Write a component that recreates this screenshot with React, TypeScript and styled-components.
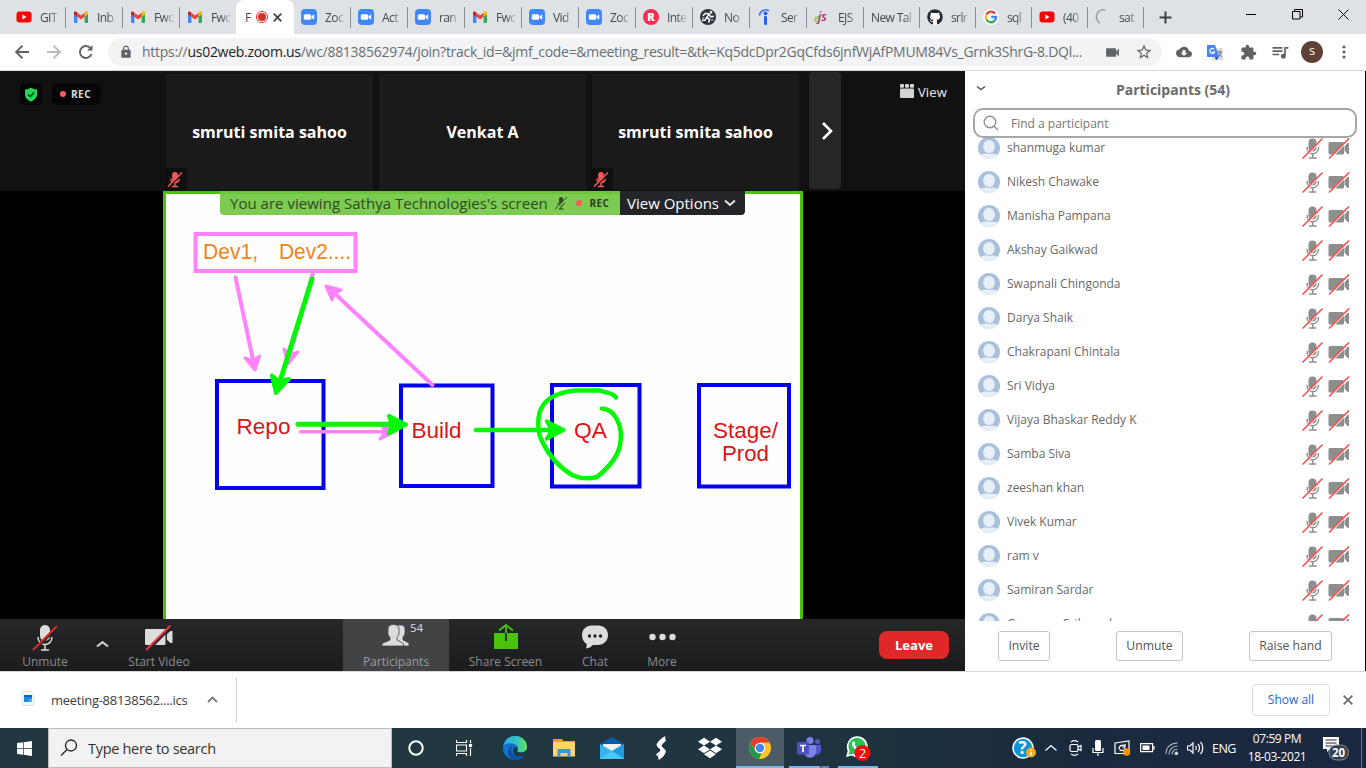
import React from 'react';
import styled, { createGlobalStyle, css } from 'styled-components';
import { FaGithub, FaDropbox, FaWindows } from 'react-icons/fa';
import { MdCloudDownload, MdExtension, MdVideocam, MdStarBorder, MdLock, MdQueueMusic } from 'react-icons/md';

const GlobalStyle = createGlobalStyle`
  * { box-sizing: border-box; }
  body { margin: 0; overflow: hidden; background: #fff; }
`;

const UI = `'Open Sans', 'Noto Sans', sans-serif`;

const Screen = styled.div`
  width: 1366px;
  height: 768px;
  display: flex;
  flex-direction: column;
  overflow: hidden;
  font-family: ${UI};
`;

/* ---------- generic text and icon slot ---------- */

const Label = styled.span<{ $size?: number; $track?: number; $color?: string; $weight?: number }>`
  font-size: ${p => p.$size ?? 12}px;
  letter-spacing: ${p => p.$track ?? 0}px;
  color: ${p => p.$color ?? '#5f6368'};
  font-weight: ${p => p.$weight ?? 400};
  white-space: nowrap;
`;

const Slot = styled.div<{ $w: number }>`
  width: ${p => p.$w}px;
  flex: none;
  display: flex;
  align-items: center;
  justify-content: center;
  svg { display: block; flex: none; }
`;

/* ---------- browser tabs ---------- */

const TabStrip = styled.div`
  height: 34px;
  flex: none;
  display: flex;
  padding-left: 8px;
  background: #dee1e6;
`;

const Tab = styled.div<{ $w: number; $line: boolean }>`
  width: ${p => p.$w}px;
  flex: none;
  height: 34px;
  display: flex;
  align-items: center;
  gap: 8px;
  padding-left: 7px;
  border-left: 1px solid transparent;
  ${p => p.$line && css`border-image: linear-gradient(transparent 8px, #8a8d91 8px, #8a8d91 27px, transparent 27px) 1;`}
  svg { display: block; flex: none; }
`;

const TabTitle = styled.span`
  flex: 1;
  white-space: nowrap;
  font-size: 12px;
  letter-spacing: -0.6px;
  color: #45494d;
  margin-right: 5px;
  mask-image: linear-gradient(to right, #000 calc(100% - 10px), rgba(0, 0, 0, 0.1));
`;

const ActiveTab = styled.div`
  width: 58px;
  margin-right: -1px;
  height: 34px;
  flex: none;
  display: flex;
  align-items: center;
  padding-left: 9px;
  gap: 5px;
  background: #fff;
  border-radius: 8px 8px 0 0;
  svg { display: block; flex: none; }
`;

const WindowControls = styled.div`
  margin-left: auto;
  display: flex;
  height: 28px;
`;

const Gmail = () => (
  <svg width="16" height="16" viewBox="0 0 16 16">
    <path d="M1 4v9a1 1 0 0 0 1 1h2.400V7.500z" fill="#4285f4" />
    <path d="M15 4v9a1 1 0 0 1-1 1h-2.400V7.500z" fill="#34a853" />
    <path d="M11.600 4.200V7.700L15 5.200V3.600c0-1.400-1.600-2-2.600-1.200z" fill="#fbbc04" />
    <path d="M4.400 7.700V3.800L8 6.500l3.600-2.700v3.900L8 10.400z" fill="#ea4335" />
    <path d="M1 3.600v1.600l3.400 2.500V3.800L3.600 2.900C2.600 2 1 2.400 1 3.600z" fill="#c5221f" />
  </svg>
);

const Youtube = () => (
  <svg width="16" height="16" viewBox="0 0 16 16">
    <rect x="0.500" y="2.500" width="15" height="11" rx="3" fill="#f00" />
    <path d="M6.400 5.600v4.800L10.500 8z" fill="#fff" />
  </svg>
);

const ZoomLogo = () => (
  <svg width="16" height="16" viewBox="0 0 16 16">
    <rect width="16" height="16" rx="4" fill="#4087fc" />
    <rect x="2.800" y="5.200" width="7.400" height="5.600" rx="1.500" fill="#fff" />
    <path d="M10.600 7.200l2.600-1.900v5.400l-2.600-1.900z" fill="#fff" />
  </svg>
);

const RLogo = () => (
  <svg width="16" height="16" viewBox="0 0 16 16">
    <circle cx="8" cy="8" r="8" fill="#fb2b54" />
    <text x="8" y="12" fontSize="11" fontWeight="800" fontFamily="Open Sans" textAnchor="middle" fill="#fff">R</text>
  </svg>
);

const Runner = () => (
  <svg width="16" height="16" viewBox="0 0 16 16">
    <circle cx="8" cy="8" r="8" fill="#2f3640" />
    <circle cx="11" cy="3.400" r="1.300" fill="#fff" />
    <path d="M3 6.800L5.500 4.300l3.500.8-2.300 3.400 2.800 1.800-.8 3.200M9 5.500l1.800 2.300 3-.6M6.500 8.500L5 11.300H2" fill="none" stroke="#fff" strokeWidth="1.500" />
    <path d="M2 9h2M11 11h2.500" stroke="#fff" strokeWidth=".8" />
  </svg>
);

const Indeed = () => (
  <svg width="16" height="16" viewBox="0 0 16 16">
    <circle cx="8.500" cy="4.300" r="1.900" fill="#2164f3" />
    <rect x="7" y="7" width="3" height="9" rx="1.200" fill="#2164f3" />
    <path d="M2.500 6.500C2.800 2 7.500-.5 12 1.600" fill="none" stroke="#2164f3" strokeWidth="1.300" />
  </svg>
);

const Ejs = () => (
  <svg width="16" height="16" viewBox="0 0 16 16">
    <text x="0" y="13" fontSize="11" fontStyle="italic" fontWeight="700" fontFamily="Open Sans" fill="#a8c36a">e</text>
    <text x="4" y="12" fontSize="12" fontStyle="italic" fontWeight="600" fontFamily="Open Sans" fill="#b3245f">js</text>
  </svg>
);

const GoogleG = () => (
  <svg width="16" height="16" viewBox="0 0 16 16">
    <circle cx="8" cy="8" r="8" fill="#fff" />
    <g fill="none" strokeWidth="2.300">
      <path d="M12.200 4.600A5.200 5.200 0 0 0 3.400 5.600" stroke="#ea4335" />
      <path d="M3.400 5.600A5.200 5.200 0 0 0 3.400 10.400" stroke="#fbbc05" />
      <path d="M3.400 10.400A5.200 5.200 0 0 0 11.400 12" stroke="#34a853" />
      <path d="M11.400 12A5.200 5.200 0 0 0 13.100 8H8.200" stroke="#4285f4" />
    </g>
  </svg>
);

const GithubMark = () => (
  <svg width="16" height="16" viewBox="0 0 16 16">
    <circle cx="8" cy="8" r="8" fill="#fff" />
    <FaGithub x="0" y="0" size={16} color="#24292e" />
  </svg>
);

const Spinner = () => (
  <svg width="16" height="16" viewBox="0 0 16 16">
    <path d="M10.500 1.200A7 7 0 0 0 5 14" fill="none" stroke="#9b9fa3" strokeWidth="1.500" />
  </svg>
);

const tabsBefore: [React.ReactNode, string][] = [
  [<Youtube />, 'GIT'], [<Gmail />, 'Inb'], [<Gmail />, 'Fwc'], [<Gmail />, 'Fwc'],
];
const tabsAfter: [React.ReactNode, string, number][] = [
  [<ZoomLogo />, 'Zoc', 57], [<ZoomLogo />, 'Act', 57], [<ZoomLogo />, 'ran', 57], [<Gmail />, 'Fwc', 57],
  [<ZoomLogo />, 'Vid', 57], [<ZoomLogo />, 'Zoc', 57], [<RLogo />, 'Inte', 57], [<Runner />, 'No', 57],
  [<Indeed />, 'Ser', 57], [<Ejs />, 'EJS', 57], [null, 'New Tal', 56], [<GithubMark />, 'srlr', 56],
  [<GoogleG />, 'sql', 56], [<Youtube />, '(40', 56], [<Spinner />, 'sat', 56],
];

const Tabs = () => (
  <TabStrip>
    {tabsBefore.map(([icon, title], i) => (
      <Tab key={i} $w={57} $line={i > 0}>{icon}<TabTitle>{title}</TabTitle></Tab>
    ))}
    <ActiveTab>
      <Label $size={12} $color="#45494d">F</Label>
      <svg width="12" height="14" viewBox="0 0 12 14">
        <circle cx="6" cy="7" r="5.500" fill="none" stroke="#d93025" strokeWidth="1" />
        <circle cx="6" cy="7" r="4" fill="#d93025" />
      </svg>
      <svg width="9" height="9" viewBox="0 0 9 9" stroke="#3c4043" strokeWidth="1.700"><path d="M.7.700l7.600 7.600M8.300.7L.7 8.300" /></svg>
    </ActiveTab>
    {tabsAfter.map(([icon, title, w], i) => (
      <Tab key={i} $w={w} $line={i > 0}>{icon}<TabTitle>{title}</TabTitle></Tab>
    ))}
    <Tab $w={45} $line>
      <Slot $w={28}><svg width="13" height="13" viewBox="0 0 13 13" stroke="#3c4043" strokeWidth="2"><path d="M6.500.5v12M.5 6.500h12" /></svg></Slot>
    </Tab>
    <WindowControls>
      <Slot $w={46}><svg width="10" height="10" stroke="#000"><path d="M0 5.500h10" /></svg></Slot>
      <Slot $w={46}><svg width="11" height="11" fill="none" stroke="#000"><path d="M.5 2.500h7.500v7.500H.5zM2.500 2.500v-2H10.500V8H8" /></svg></Slot>
      <Slot $w={46}><svg width="11" height="11" stroke="#000"><path d="M.5.5l10 10M10.500.5l-10 10" /></svg></Slot>
    </WindowControls>
  </TabStrip>
);

/* ---------- browser toolbar ---------- */

const Toolbar = styled.div`
  height: 37px;
  flex: none;
  display: flex;
  align-items: center;
  padding-left: 6px;
  background: #fff;
  border-bottom: 1px solid #d5d8da;
`;

const Omnibox = styled.div`
  width: 1054px;
  height: 28px;
  margin-left: 6px;
  border-radius: 14px;
  background: #f1f3f4;
  display: flex;
  align-items: center;
  padding-left: 10px;
`;

const Url = styled.div`
  width: 952px;
  margin-left: 8px;
  white-space: nowrap;
  font-size: 14px;
  line-height: 18px;
  margin-top: -1px;
  letter-spacing: -0.285px;
  color: #6a6e73;
  b { font-weight: 400; color: #202124; }
`;

const Avatar = styled.div`
  width: 22px;
  height: 22px;
  border-radius: 50%;
  background: #5d4037;
  color: #fff;
  font: 400 13px/19px ${UI};
  text-align: center;
`;

const Arrow = ({ flip, color }: { flip?: boolean; color: string }) => (
  <svg width="14" height="14" viewBox="0 0 14 14" fill="none" stroke={color} strokeWidth="1.900">
    <path d={flip ? 'M0 7h13M6.500.7L12.800 7l-6.300 6.300' : 'M14 7H1M7.500.7L1.200 7l6.300 6.300'} />
  </svg>
);

const AddressBar = () => (
  <Toolbar>
    <Slot $w={32}><Arrow color="#5f6368" /></Slot>
    <Slot $w={32}><Arrow flip color="#bababa" /></Slot>
    <Slot $w={32}>
      <svg width="16" height="16" viewBox="0 0 16 16" fill="none" stroke="#5f6368" strokeWidth="1.900">
        <path d="M13.500 10.200A6 6 0 1 1 12.600 4.200" /><path d="M14.500 1v5.400H9.100z" fill="#5f6368" stroke="none" />
      </svg>
    </Slot>
    <Omnibox>
      <Slot $w={16}><MdLock size={14} color="#5f6368" /></Slot>
      <Url>https://<b>us02web.zoom.us</b>/wc/88138562974/join?track_id=&amp;jmf_code=&amp;meeting_result=&amp;tk=Kq5dcDpr2GqCfds6jnfWjAfPMUM84Vs_Grnk3ShrG-8.DQl...</Url>
      <Slot $w={36}><MdVideocam size={17} color="#5f6368" /></Slot>
      <Slot $w={28}><MdStarBorder size={18} color="#5f6368" /></Slot>
    </Omnibox>
    <Slot $w={44}><MdCloudDownload size={16} color="#5f6368" /></Slot>
    <Slot $w={18}>
      <svg width="18" height="17" viewBox="0 0 18 17">
        <rect x="6" y="4" width="11" height="12" fill="#dcdcdc" />
        <path d="M1 1h8l4 12H2a1 1 0 0 1-1-1z" fill="#4285f4" />
        <path d="M9 13h4l-3 3.500z" fill="#3051c8" />
        <path d="M8.200 5.300A2.500 2.500 0 1 0 8.600 8H6.200" fill="none" stroke="#fff" strokeWidth="1.200" />
        <path d="M11 8h5M13.500 6.800V8M15 8c-.5 2.500-1.500 3.500-3 4.500M12.500 9.500l3 3.500" fill="none" stroke="#5e6d7a" />
      </svg>
    </Slot>
    <Slot $w={48}><MdExtension size={17} color="#5f6368" /></Slot>
    <Slot $w={15}><MdQueueMusic size={20} color="#5f6368" /></Slot>
    <Slot $w={50}><Avatar>s</Avatar></Slot>
    <Slot $w={14}><svg width="4" height="14" fill="#5f6368"><circle cx="2" cy="2" r="1.600" /><circle cx="2" cy="7" r="1.600" /><circle cx="2" cy="12" r="1.600" /></svg></Slot>
  </Toolbar>
);

/* ---------- meeting ---------- */

const MeetingArea = styled.div`
  height: 600px;
  flex: none;
  display: flex;
  border-right: 1px solid #000;
`;

const Stage = styled.div`
  width: 965px;
  flex: none;
  display: flex;
  flex-direction: column;
  background: #000;
`;

const Filmstrip = styled.div`
  height: 120px;
  flex: none;
  display: flex;
  background: #111;
  border-top: 2px solid #101510;
`;

const StripSide = styled.div<{ $w: number }>`
  width: ${p => p.$w}px;
  flex: none;
  display: flex;
  align-items: flex-start;
`;

const ShieldBox = styled.div`
  width: 22px;
  height: 22px;
  margin: 10px 10px 0 20px;
  border-radius: 5px;
  background: #060606;
  display: flex;
  align-items: center;
  justify-content: center;
`;

const RecPill = styled.div`
  width: 49px;
  height: 22px;
  margin-top: 10px;
  padding-left: 8px;
  border-radius: 7px;
  background: #060606;
  display: flex;
  align-items: center;
  gap: 5px;
`;

const Dot = styled.i`
  width: 6px;
  height: 6px;
  border-radius: 50%;
  background: #ff5a5a;
`;

const Thumb = styled.div`
  width: 207px;
  height: 116px;
  margin: 1px 6px 0 0;
  flex: none;
  position: relative;
  display: flex;
  align-items: center;
  justify-content: center;
  background: #1a1a1a;
`;

const MuteBadge = styled.div`
  position: absolute;
  left: 0;
  bottom: 0;
  width: 21px;
  height: 22px;
  background: #0f0f0f;
  padding: 3px 0 0 1px;
`;

const NextButton = styled.div`
  width: 32px;
  height: 117px;
  margin: -1px 0 0 4px;
  padding-left: 3px;
  border-radius: 4px;
  background: #262626;
  display: flex;
  align-items: center;
  justify-content: center;
`;

const ViewToggle = styled.div`
  display: flex;
  align-items: center;
  align-self: flex-start;
  gap: 4px;
  margin: 10px 0 0 59px;
  svg { margin-top: -2px; }
`;

const RedMic = () => (
  <svg width="16" height="17" viewBox="0 0 16 17" fill="none" stroke="#f25a5a">
    <rect x="5.200" y="1" width="5.600" height="10" rx="2.800" fill="#f25a5a" stroke="none" />
    <path d="M3.800 7.500c0 5.500 8.400 5.500 8.400 0M8 11.800v3.700M5 15.500h6" strokeWidth="1.400" />
    <path d="M1.500 16.500L15.500 2.500" stroke="#111" strokeWidth="1.500" /><path d="M1 15.500L15 1.500" strokeWidth="1.500" />
  </svg>
);

const SharedScreen = styled.div`
  width: 640px;
  height: 428px;
  margin-left: 163px;
  position: relative;
  background: #fefefe;
  border: 3px solid #4ac40a;
  border-bottom: 0;
  svg { display: block; }
`;

const ShareBanner = styled.div`
  position: absolute;
  left: 54px;
  top: -3px;
  height: 24px;
  display: flex;
`;

const BannerText = styled.div`
  width: 400px;
  padding-left: 10px;
  display: flex;
  align-items: center;
  background: linear-gradient(#6cc639 3px, #7dcb51 3px);
  border-radius: 0 0 0 4px;
`;

const ViewOptions = styled.div`
  width: 125px;
  padding-left: 7px;
  display: flex;
  align-items: center;
  gap: 5px;
  background: #242528;
  border-radius: 0 0 4px 0;
`;

const Whiteboard = () => (
  <svg width="634" height="425" viewBox="166 194 634 425" strokeLinecap="round" strokeLinejoin="round">
    <g fill="none" stroke="#0202ee" strokeWidth="4" strokeLinejoin="miter">
      <rect x="217" y="381" width="106.500" height="107" />
      <rect x="401" y="385.500" width="91.500" height="100.500" />
      <rect x="552" y="385" width="87.500" height="101.500" />
      <rect x="699" y="385" width="90" height="101.500" />
    </g>
    <g fontFamily="Liberation Sans" fontSize="22.500" fill="#dc1414">
      <text x="236.500" y="434" textLength="54" lengthAdjust="spacingAndGlyphs">Repo</text>
      <text x="411.500" y="438" textLength="50" lengthAdjust="spacingAndGlyphs">Build</text>
      <text x="574" y="438" textLength="33" lengthAdjust="spacingAndGlyphs">QA</text>
      <text x="713" y="438" textLength="65" lengthAdjust="spacingAndGlyphs">Stage/</text>
      <text x="722" y="461" textLength="47" lengthAdjust="spacingAndGlyphs">Prod</text>
      <text x="203" y="259" textLength="55" lengthAdjust="spacingAndGlyphs" fill="#f08418">Dev1,</text>
      <text x="279" y="259" textLength="72" lengthAdjust="spacingAndGlyphs" fill="#f08418">Dev2....</text>
    </g>
    <rect x="195.500" y="234" width="160" height="37" fill="none" stroke="#ff82ff" strokeWidth="4" strokeLinejoin="miter" />
    <g stroke="#ff82ff" fill="#ff82ff" strokeWidth="4">
      <path d="M235.500 277.500L253.500 362" /><path d="M255 370l-10-12 8 3 6.500-5z" strokeWidth="3" />
      <path d="M313 273L289 358" /><path d="M288 364l-4-15 6 6 8-3z" strokeWidth="3" />
      <path d="M432.500 385L333 292" /><path d="M326 286l15 4-7 3-2 7z" strokeWidth="3" />
      <path d="M300.500 431.800H388" strokeWidth="3.500" /><path d="M396 431l-16 8 5-7-3-6z" strokeWidth="3" />
    </g>
    <g stroke="#04f804" fill="#04f804" strokeWidth="5">
      <path d="M312 279L279.500 383" /><path d="M276 393l-4-17.500 7 6 10-2.500z" strokeWidth="4" />
      <path d="M298 424.300H398" /><path d="M406 424.500l-17 9 3-9-3-8.500z" strokeWidth="4" />
      <path d="M476 430H557" strokeWidth="4.500" /><path d="M564 430l-17.500 9 5-9-5-9z" strokeWidth="3.500" />
      <path fill="none" strokeWidth="4.500" d="M616 397.500C613 392.500 605 393 600 390.500H575C562 392 548 396 542 407C537 415 537 432 542 441C549 456 560 468 573 475.500C582 479 590 479 597 477C608 468 618 456 620 445C624 425 614 409 602 408.500" />
    </g>
  </svg>
);

const ControlBar = styled.div`
  height: 52px;
  flex: none;
  display: flex;
  background: linear-gradient(#262729, #1b1c1e);
`;

const Control = styled.div<{ $w: number; $ml?: number; $on?: boolean }>`
  width: ${p => p.$w}px;
  margin-left: ${p => p.$ml ?? 0}px;
  height: 52px;
  flex: none;
  position: relative;
  display: flex;
  flex-direction: column;
  align-items: center;
  justify-content: flex-end;
  padding-bottom: 1px;
  background: ${p => (p.$on ? '#424345' : 'transparent')};
`;

const ControlIcon = styled.div`
  height: 29px;
  display: flex;
  align-items: flex-start;
`;

const Count = styled.span`
  position: absolute;
  left: 67px;
  top: 1px;
  font-size: 11.500px;
  color: #dcdcdc;
`;

const Leave = styled.div`
  width: 70px;
  height: 28px;
  margin: 12px 0 0 183px;
  border-radius: 8px;
  background: #e02828;
  display: flex;
  align-items: center;
  justify-content: center;
`;

const ctl = { $size: 12, $color: '#8c8c8e' };

const Controls = () => (
  <ControlBar>
    <Control $w={90}>
      <ControlIcon>
        <svg width="26" height="27" viewBox="0 0 26 27" fill="none" stroke="#dcdcdc" strokeWidth="1.500">
          <rect x="8" y="1" width="10" height="16" rx="5" fill="#dcdcdc" stroke="none" />
          <path d="M6 13c0 10 14 10 14 0M13 21v5M9 26h8" />
          <path d="M2 27L26 3" stroke="#242527" strokeWidth="2" /><path d="M1 26L25 2" stroke="#e02828" strokeWidth="2" />
        </svg>
      </ControlIcon>
      <Label {...ctl}>Unmute</Label>
    </Control>
    <Slot $w={26}><svg width="15" height="8" fill="none" stroke="#cfcfcf" strokeWidth="2.200"><path d="M1 5.500l5.500-4.300L12 5.500" /></svg></Slot>
    <Control $w={86}>
      <ControlIcon>
        <svg width="30" height="27" viewBox="0 0 30 27">
          <rect x="1" y="5" width="20.500" height="16" rx="1" fill="#dcdcdc" /><path d="M23 10l3.500-3H28.500v12h-2l-3.500-3z" fill="#dcdcdc" />
          <path d="M3 27L28 2" stroke="#242527" strokeWidth="3" /><path d="M2 26L26.500 1.500" stroke="#e83a3a" strokeWidth="2" />
        </svg>
      </ControlIcon>
      <Label {...ctl}>Start Video</Label>
    </Control>
    <Control $w={106} $ml={141} $on>
      <ControlIcon>
        <svg width="29" height="24" viewBox="0 0 29 24" fill="#dcdcdc" stroke="#424345" strokeWidth=".8">
          <path d="M13 1h6c2.500 0 4 1.500 4 4v4c0 2-1.500 3-2 4v3l6 3v3H13z" />
          <path d="M6 5c0-3 2-4.500 5.500-4.500S17 2 17 5v4c0 2-1.500 4-2 4.500V16l6.500 3.500V22H0v-2.500L8 16v-2.500C7 12.500 6 11 6 9z" />
        </svg>
      </ControlIcon>
      <Count>54</Count>
      <Label {...ctl} $color="#9c9d9f">Participants</Label>
    </Control>
    <Control $w={113}>
      <ControlIcon>
        <svg width="24" height="27" viewBox="0 0 24 27">
          <path d="M0 9h24v16H0z" fill="#4ac40a" />
          <path d="M12 1v8M5 6.500l7-5.500 7 5.500" fill="none" stroke="#4ac40a" strokeWidth="1.800" /><path d="M12 9v8" stroke="#1f2a1f" strokeWidth="1.800" />
        </svg>
      </ControlIcon>
      <Label {...ctl}>Share Screen</Label>
    </Control>
    <Control $w={66}>
      <ControlIcon>
        <svg width="26" height="26" viewBox="0 0 26 26">
          <path d="M10 1.500h6c6 0 10 4 10 9.500s-4 10-10 10h-5c-2 2-4 3.200-7 3.500.7-2 .8-3.200.6-4.500C1.500 18 0 15 0 11 0 5.500 4 1.500 10 1.500z" fill="#dcdcdc" />
          <circle cx="7.500" cy="12" r="1.700" fill="#222" /><circle cx="13" cy="12" r="1.700" fill="#222" /><circle cx="18.500" cy="12" r="1.700" fill="#222" />
        </svg>
      </ControlIcon>
      <Label {...ctl}>Chat</Label>
    </Control>
    <Control $w={68}>
      <ControlIcon>
        <svg width="27" height="25" fill="#dcdcdc"><circle cx="3.500" cy="13" r="3.200" /><circle cx="13.500" cy="13" r="3.200" /><circle cx="23.500" cy="13" r="3.200" /></svg>
      </ControlIcon>
      <Label {...ctl}>More</Label>
    </Control>
    <Leave><Label $size={13} $weight={700} $color="#fff">Leave</Label></Leave>
  </ControlBar>
);

const Meeting = () => (
  <Stage>
    <Filmstrip>
      <StripSide $w={166}>
        <ShieldBox>
          <svg width="14" height="15" viewBox="0 0 14 15"><path d="M7 .5c2 1.500 4 2 6 2v5c0 3.500-2.500 5.500-6 7-3.500-1.500-6-3.500-6-7v-5c2 0 4-.5 6-2z" fill="#23d959" /><path d="M4 7.500l2.200 2.200L10 5.500" fill="none" stroke="#073c18" strokeWidth="1.500" /></svg>
        </ShieldBox>
        <RecPill><Dot /><Label $size={10} $weight={700} $color="#ddd" $track={0.5}>REC</Label></RecPill>
      </StripSide>
      {['smruti smita sahoo', 'Venkat A', 'smruti smita sahoo'].map((name, i) => (
        <Thumb key={i}>
          <Label $size={16} $weight={700} $color="#fff">{name}</Label>
          {i !== 1 && <MuteBadge><RedMic /></MuteBadge>}
        </Thumb>
      ))}
      <NextButton><svg width="12" height="18" fill="none" stroke="#fff" strokeWidth="2.600"><path d="M2 1l8 8-8 8" /></svg></NextButton>
      <ViewToggle>
        <svg width="14" height="14" viewBox="0 0 14 14" fill="#d4d4d4"><rect y="4.500" width="14" height="9.500" rx="1" /><rect y="0" width="4" height="3.800" rx="1" /><rect x="5" width="4" height="3.800" rx="1" /><rect x="10" width="4" height="3.800" rx="1" /></svg>
        <Label $size={13} $color="#eee" $weight={500} $track={0.1}>View</Label>
      </ViewToggle>
    </Filmstrip>
    <SharedScreen>
      <Whiteboard />
      <ShareBanner>
        <BannerText>
          <Label $size={15} $color="#2d4a24" $track={0.02}>You are viewing Sathya Technologies's screen</Label>
          <Slot $w={26}>
            <svg width="14" height="14" viewBox="0 0 14 14" fill="none" stroke="#2d4a24"><rect x="5" y="1" width="4" height="8" rx="2" fill="#2d4a24" stroke="none" /><path d="M3.500 6.500c0 4.500 7 4.500 7 0M7 10v3M4.500 13h5" /><path d="M2 13.500L13.500 2" stroke="#7dcb51" strokeWidth="1.500" /><path d="M1 13L13 1" /></svg>
          </Slot>
          <Slot $w={10}><Dot /></Slot>
          <Slot $w={31}><Label $size={10} $weight={700} $color="#2d3a2a" $track={0.4}>REC</Label></Slot>
        </BannerText>
        <ViewOptions>
          <Label $size={15} $color="#fff">View Options</Label>
          <svg width="12" height="8" fill="none" stroke="#e8e8e8" strokeWidth="1.800"><path d="M1 1.500l5 4.500 5-4.500" /></svg>
        </ViewOptions>
      </ShareBanner>
    </SharedScreen>
    <Controls />
  </Stage>
);

/* ---------- participants panel ---------- */

const Panel = styled.div`
  flex: 1;
  display: flex;
  flex-direction: column;
  background: #fff;
`;

const PanelHeader = styled.div`
  height: 37px;
  flex: none;
  display: flex;
  align-items: center;
  padding: 0 8px 2px;
`;

const PanelTitle = styled.div`
  flex: 1;
  text-align: center;
`;

const SearchBox = styled.div`
  height: 30px;
  margin: 0 8px;
  flex: none;
  border: 2px solid #a6a6a6;
  border-radius: 10px;
  display: flex;
  align-items: center;
  padding-left: 8px;
  gap: 11px;
`;

const List = styled.div`
  height: 483px;
  flex: none;
  overflow: hidden;
`;

const Row = styled.div`
  height: 34px;
  display: flex;
  align-items: center;
  padding: 0 15px 0 13px;
  gap: 7px;
  &:first-child { margin-top: -7px; }
  svg { display: block; flex: none; }
`;

const Name = styled.div`
  flex: 1;
  font-size: 12px;
  padding-bottom: 1px;
  color: #686868;
`;

const Devices = styled.div`
  display: flex;
  gap: 5px;
`;

const PanelFooter = styled.div`
  flex: 1;
  display: flex;
  justify-content: space-between;
  align-items: flex-start;
  padding: 10px 33px 0;
`;

const FooterButton = styled.div<{ $w: number }>`
  width: ${p => p.$w}px;
  height: 30px;
  border: 1px solid #c4c4c8;
  border-radius: 3px;
  padding-bottom: 1px;
  display: flex;
  align-items: center;
  justify-content: center;
`;

const names = ['shanmuga kumar', 'Nikesh Chawake', 'Manisha Pampana', 'Akshay Gaikwad', 'Swapnali Chingonda', 'Darya Shaik', 'Chakrapani Chintala', 'Sri Vidya', 'Vijaya Bhaskar Reddy K', 'Samba Siva', 'zeeshan khan', 'Vivek Kumar', 'ram v', 'Samiran Sardar', 'Gummpu Srikanad'];

const Person = () => (
  <svg width="22" height="22" viewBox="0 0 22 22">
    <circle cx="11" cy="11" r="11" fill="#a9c0dc" />
    <path d="M2.500 18C5 15.500 17 15.500 19.500 18A11 11 0 0 1 2.500 18z" fill="#e9eff6" />
    <ellipse cx="11" cy="9.500" rx="6.300" ry="7" fill="#e9eff6" stroke="#a9c0dc" />
  </svg>
);

const MicOff = () => (
  <svg width="21" height="21" viewBox="0 0 21 21" fill="none" stroke="#8e8e8e" strokeWidth="1.500">
    <rect x="6.500" y="0.500" width="8" height="13" rx="4" fill="#8e8e8e" stroke="none" />
    <path d="M5 9c0 9 11.500 9 11.500 0M10.700 16v3.500M7 20h7.500" />
    <path d="M.8 21L21 1" stroke="#fff" strokeWidth="1.800" /><path d="M.5 20.500L20.500 .5" stroke="#ff4040" strokeWidth="1.400" />
  </svg>
);

const CamOff = () => (
  <svg width="22" height="21" viewBox="0 0 22 21">
    <rect x="0.500" y="4" width="15.500" height="12.500" rx="1.500" fill="#8e8e8e" /><path d="M16.500 8.500l3-3.500H21v11h-1.500l-3-3.500z" fill="#8e8e8e" />
    <path d="M1.300 21L21.500 1" stroke="#fff" strokeWidth="1.800" /><path d="M1 20.500L21 .5" stroke="#ff4040" strokeWidth="1.400" />
  </svg>
);

const Participants = () => (
  <Panel>
    <PanelHeader>
      <Slot $w={16}><svg width="10" height="6" fill="none" stroke="#555" strokeWidth="1.400"><path d="M1 .5l4 3 4-3" /></svg></Slot>
      <PanelTitle><Label $size={14} $weight={700} $color="#6a6a6a">Participants (54)</Label></PanelTitle>
    </PanelHeader>
    <SearchBox>
      <svg width="17" height="17" viewBox="0 0 17 17" fill="none" stroke="#8f8f8f" strokeWidth="1.400"><circle cx="7" cy="7" r="5.800" /><path d="M11.200 11.200l3.600 3.800" /></svg>
      <Label $size={12} $color="#757575">Find a participant</Label>
    </SearchBox>
    <List>
      {names.map(n => <Row key={n}><Person /><Name>{n}</Name><Devices><MicOff /><CamOff /></Devices></Row>)}
    </List>
    <PanelFooter>
      <FooterButton $w={52}><Label $size={12.2} $color="#555">Invite</Label></FooterButton>
      <FooterButton $w={67}><Label $size={12.2} $color="#555">Unmute</Label></FooterButton>
      <FooterButton $w={83}><Label $size={12.2} $color="#555">Raise hand</Label></FooterButton>
    </PanelFooter>
  </Panel>
);

/* ---------- downloads shelf ---------- */

const Shelf = styled.div`
  height: 57px;
  flex: none;
  display: flex;
  align-items: center;
  border-top: 1px solid #d6d8da;
  background: #fff;
`;

const Download = styled.div`
  width: 237px;
  height: 44px;
  display: flex;
  align-items: center;
  padding: 0 0 2px 21px;
  border-right: 1px solid #cdcfd1;
  svg { flex: none; }
`;

const FileName = styled.div`
  width: 153px;
  flex: none;
  padding-left: 16px;
`;

const ShowAll = styled.div`
  width: 78px;
  height: 32px;
  margin: 0 0 1px auto;
  padding-bottom: 1px;
  border: 1px solid #dadce0;
  border-radius: 4px;
  display: flex;
  align-items: center;
  justify-content: center;
`;

const Downloads = () => (
  <Shelf>
    <Download>
      <svg width="14" height="16" viewBox="0 0 14 16"><path d="M1 .5h9l3 3v11H1z" fill="#f5f5f5" stroke="#e4e4e4" /><rect x="3" y="4" width="8" height="7" fill="#1d8be0" /><path d="M3 4h8v2H3z" fill="#0b64b5" /><path d="M8 8h3v3H8z" fill="#50b4f4" /></svg>
      <FileName><Label $size={13} $track={-0.27} $color="#3c4043">meeting-88138562....ics</Label></FileName>
      <Slot $w={48}><svg width="11" height="7" fill="none" stroke="#75797d" strokeWidth="1.800"><path d="M1 6l4.500-4.500L10 6" /></svg></Slot>
    </Download>
    <ShowAll><Label $size={12} $weight={500} $color="#1a66d8">Show all</Label></ShowAll>
    <Slot $w={36}><svg width="10" height="10" stroke="#6b6f73" strokeWidth="1.900"><path d="M.7.700l8.600 8.600M9.300.7L.7 9.300" /></svg></Slot>
  </Shelf>
);

/* ---------- taskbar ---------- */

const Taskbar = styled.div`
  height: 40px;
  flex: none;
  display: flex;
  background: linear-gradient(to right, #20373f, #213840 30%, #1f3440 60%, #1a2b3e 75%, #1a2740);
`;

const TaskSearch = styled.div`
  width: 344px;
  flex: none;
  height: 40px;
  display: flex;
  align-items: center;
  background: #f2f2f2;
  border: 1px solid #b8bcbe;
`;

const TaskApp = styled(Slot)<{ $bar?: string; $on?: boolean }>`
  background-color: ${p => (p.$on ? '#4c5b65' : 'transparent')};
  ${p => p.$bar && css`
    background-image: ${p.$bar};
    background-size: 100% 2px;
    background-position: bottom;
    background-repeat: no-repeat;
  `}
`;

const Clock = styled.div`
  width: 72px;
  flex: none;
  display: flex;
  flex-direction: column;
  align-items: center;
  line-height: 18px;
  padding-top: 2px;
`;

const ShowDesktop = styled.div`
  width: 5px;
  margin-left: auto;
  border-left: 1px solid #6b7784;
`;

const Edge = () => (
  <svg width="24" height="24" viewBox="0 0 24 24">
    <defs>
      <linearGradient id="edgeTop" x1="0" x2="1"><stop offset="0" stopColor="#2aa8e8" /><stop offset=".6" stopColor="#35c8c0" /><stop offset="1" stopColor="#6be04a" /></linearGradient>
    </defs>
    <circle cx="12" cy="12" r="12" fill="#1273cf" />
    <path d="M.3 10C2 3 7 0 12 0c7 0 12 5 12 10.500 0 4-3 6-6.500 6-2 0-3.800-.8-3.300-2 1.600-2 .6-5.500-2.700-6.500C7 6.600 2 7 .3 10z" fill="url(#edgeTop)" />
    <path d="M11.500 8C8 9 7.500 13 9 16c2 4 7 6 12.500 3.500C18 24.500 12 25 8 22.500 3 19 4 10 11.500 8z" fill="#0c50a0" />
    <path d="M14.200 14.500c-.5 1.200 1.300 2 3.300 2 2.500 0 5-1 6.500-3-.3 2.500-1.300 4.500-2.500 6C16 21.500 11 20 10 15.500 9.500 12 12 11 13.800 11c1 1 1 2.500.4 3.500z" fill="#20383f" />
  </svg>
);

const Explorer = () => (
  <svg width="22" height="20" viewBox="0 0 22 20">
    <path d="M0 1h9l1.500 2H22v3H0z" fill="#e5a21b" /><rect y="4" width="22" height="14.500" fill="#fdd568" />
    <path d="M4.500 11h13v8h-3v-4h-7v4h-3z" fill="#3d96dc" />
  </svg>
);

const Mail = () => (
  <svg width="24" height="22" viewBox="0 0 24 22">
    <path d="M0 7L12 0l12 7v3H0z" fill="#0c5aa6" /><path d="M3 7h18v10H3z" fill="#f2f2f2" />
    <path d="M0 7l12 7 12-7v15H0z" fill="#35b4ee" /><path d="M24 7L12 14l12 8z" fill="#2098dc" /><path d="M0 22l12-8 12 8z" fill="#4cc8fa" />
  </svg>
);

const Chrome = () => (
  <svg width="22" height="22" viewBox="0 0 22 22">
    <circle cx="11" cy="11" r="11" fill="#fbc52b" />
    <path d="M1.500 5.500A11 11 0 0 1 20.500 5.500H11L6.300 13.700z" fill="#e33b2e" />
    <path d="M1.500 5.500l4.700 8.200A5.500 5.500 0 0 0 11 16.500L12.500 16.300 10 22A11 11 0 0 1 1.500 5.500z" fill="#1b9a4c" />
    <circle cx="11" cy="11" r="5.300" fill="#fff" /><circle cx="11" cy="11" r="4.200" fill="#4285f4" />
  </svg>
);

const Teams = () => (
  <svg width="24" height="22" viewBox="0 0 24 22">
    <circle cx="20.500" cy="4.500" r="2.500" fill="#5059c9" /><path d="M17 8h7v6a4 4 0 0 1-7 2z" fill="#5059c9" />
    <circle cx="13" cy="3.500" r="3.500" fill="#7b83eb" /><path d="M8 8h11v7.500a6 6 0 0 1-11 2.500z" fill="#7b83eb" />
    <rect y="5" width="12" height="12.500" rx="1" fill="#4b53bc" />
    <path d="M3 8.500h6M6 8.500v6.500" stroke="#fff" strokeWidth="1.700" />
  </svg>
);

const Whatsapp = () => (
  <svg width="26" height="26" viewBox="0 0 26 26">
    <path d="M1 22l1.700-6A10.500 10.500 0 1 1 6.500 20.500z" fill="#fff" />
    <path d="M3.500 19.700l1.200-4A8.500 8.500 0 1 1 7.800 18.700z" fill="#28c152" />
    <path d="M7.500 7c1-1.500 2-1 2.700 1.500-.8 1.500-.8 1.500 2.800 4.500 2-1.300 2-1 4 .5-1 3-4 3-7 .5S6.500 9 7.500 7z" fill="#fff" />
    <circle cx="17.500" cy="18" r="8" fill="#f40d0d" />
    <text x="17.500" y="22.500" fontSize="12.500" fontFamily="Open Sans" textAnchor="middle" fill="#fff">2</text>
  </svg>
);

const tray = { fill: 'none', stroke: '#fff', strokeWidth: 1.2 };
const blue = 'linear-gradient(#76b9ed, #76b9ed)';

const Task = () => (
  <Taskbar>
    <Slot $w={48}><FaWindows size={17} color="#fff" /></Slot>
    <TaskSearch>
      <Slot $w={39}><svg width="18" height="18" viewBox="0 0 18 18" fill="none" stroke="#222" strokeWidth="1.300"><circle cx="11" cy="6.500" r="5.500" /><path d="M7 10.500L1 16.500" /></svg></Slot>
      <Label $size={14.5} $track={-0.3} $color="#333">Type here to search</Label>
    </TaskSearch>
    <Slot $w={48}><svg width="16" height="16"><circle cx="8" cy="8" r="6.700" fill="none" stroke="#fff" strokeWidth="2" /></svg></Slot>
    <Slot $w={48}><svg width="17" height="16" {...tray}><path d="M.5 0v2.500h10V0M.5 16v-2.500h10V16M.5 5h10v6H.5zM14.500 0v3M14.500 8v8" /><rect x="13.500" y="4.500" width="2" height="2" fill="#fff" /></svg></Slot>
    <Slot $w={54}><Edge /></Slot>
    <Slot $w={43}><Explorer /></Slot>
    <Slot $w={54}><Mail /></Slot>
    <Slot $w={44}><svg width="12" height="24" viewBox="0 0 12 24"><path d="M10.500 0C7 1.500 3 5 1.500 8.500 1.500 11 4.500 12 5.500 14 5 16 1 17.500 1 19c1.500.5 2.500 1 2.500 5C7 22.500 10 19 11 15.500 10.500 13 7.500 12 6.500 10c.5-2.500 4-4 4.500-6C10 3 10 2 10.500 0z" fill="#fff" /></svg></Slot>
    <Slot $w={53}><FaDropbox size={24} color="#fff" /></Slot>
    <TaskApp $w={48} $on $bar={blue}><Chrome /></TaskApp>
    <Slot $w={5} />
    <TaskApp $w={40} $bar="linear-gradient(to right, #76b9ed 31px, #26414f 31px, #26414f 32px, #5a8cb5 32px)"><Teams /></TaskApp>
    <Slot $w={9} />
    <TaskApp $w={40} $bar={blue}><Whatsapp /></TaskApp>
    <Slot $w={132} />
    <Slot $w={28}>
      <svg width="24" height="22" viewBox="0 0 24 22"><circle cx="11" cy="11" r="10" fill="#0d93d8" stroke="#fff" strokeWidth="1.500" /><text x="10.500" y="17" fontSize="17" fontWeight="700" fontFamily="Open Sans" textAnchor="middle" fill="#fff">?</text><circle cx="19" cy="15.500" r="5" fill="#f5a81c" /><path d="M19 12.500v1.200M19 15v3.500" stroke="#fff" strokeWidth="1.500" /></svg>
    </Slot>
    <Slot $w={25}><svg width="12" height="8" {...tray}><path d="M.5 6.500L6 1.500l5.500 5" /></svg></Slot>
    <Slot $w={24}><svg width="13" height="16" {...tray}><rect x="1" y="4.500" width="8" height="7" rx="1.500" /><path d="M9 7l3-1.500v5L9 9M2 2c2-1.500 5-1.500 7 0M2 14c2 1.500 5 1.500 7 0" /></svg></Slot>
    <Slot $w={22}><svg width="12" height="16" {...tray}><rect x="3" y="0" width="6" height="11" rx="1.500" fill="#fff" stroke="none" /><path d="M1 8v4.500h10V8M6 12.500V16" /></svg></Slot>
    <Slot $w={26}><svg width="17" height="16" {...tray}><path d="M1 3l14-2v12.500H1zM5 9c0-4 5-5 6-2M11 4v3H8M11 8c-1 3-4 3-5.500 1.500" /><circle cx="12.500" cy="12" r="3.800" fill="#fb9208" stroke="none" /></svg></Slot>
    <Slot $w={24}><svg width="15" height="10" {...tray}><path d="M.6.600h12v8H.6zM14 3v3.500" /><rect x="2.500" y="2.500" width="7" height="4.500" fill="#fff" stroke="none" /></svg></Slot>
    <Slot $w={24}><svg width="13" height="13" fill="none" stroke="#b9c0c8" strokeWidth="1.100"><path d="M1 12C1 5 6 1 12.500 1M4 12.500C4 8 7.500 4 12.500 4M7 12.500c0-3 2-5.200 5.500-5.200" /><circle cx="11.500" cy="11.500" r="1.500" fill="#fff" /></svg></Slot>
    <Slot $w={24}><svg width="17" height="14" {...tray}><path d="M.5 5h2.500l3-3v10L3 9H.5zM8.500 5c1 1 1 3 0 4M11 3c2 2 2 6 0 8M13.500 1c3 3 3 9 0 12" /></svg></Slot>
    <Slot $w={34}><Label $size={12.5} $color="#fff" $track={-0.5}>ENG</Label></Slot>
    <Clock>
      <Label $size={12} $color="#fff" $track={-0.4}>07:59 PM</Label>
      <Label $size={12} $color="#fff" $track={-0.4}>18-03-2021</Label>
    </Clock>
    <Slot $w={46}>
      <svg width="28" height="26" viewBox="0 0 28 26"><path d="M1 2h16v12H8l-3 3v-3H1z" fill="#fff" /><path d="M3.500 5h11M3.500 8h11M3.500 11h7" stroke="#1c2b3e" strokeWidth="1.200" /><rect x="7" y="10" width="19.500" height="15" rx="7.500" fill="#35404c" stroke="#8a929b" /><text x="16.500" y="22" fontSize="11.500" fontWeight="700" fontFamily="Open Sans" textAnchor="middle" fill="#fff">20</text></svg>
    </Slot>
    <ShowDesktop />
  </Taskbar>
);

export default function App() {
  return (
    <Screen>
      <GlobalStyle />
      <Tabs />
      <AddressBar />
      <MeetingArea><Meeting /><Participants /></MeetingArea>
      <Downloads />
      <Task />
    </Screen>
  );
}
